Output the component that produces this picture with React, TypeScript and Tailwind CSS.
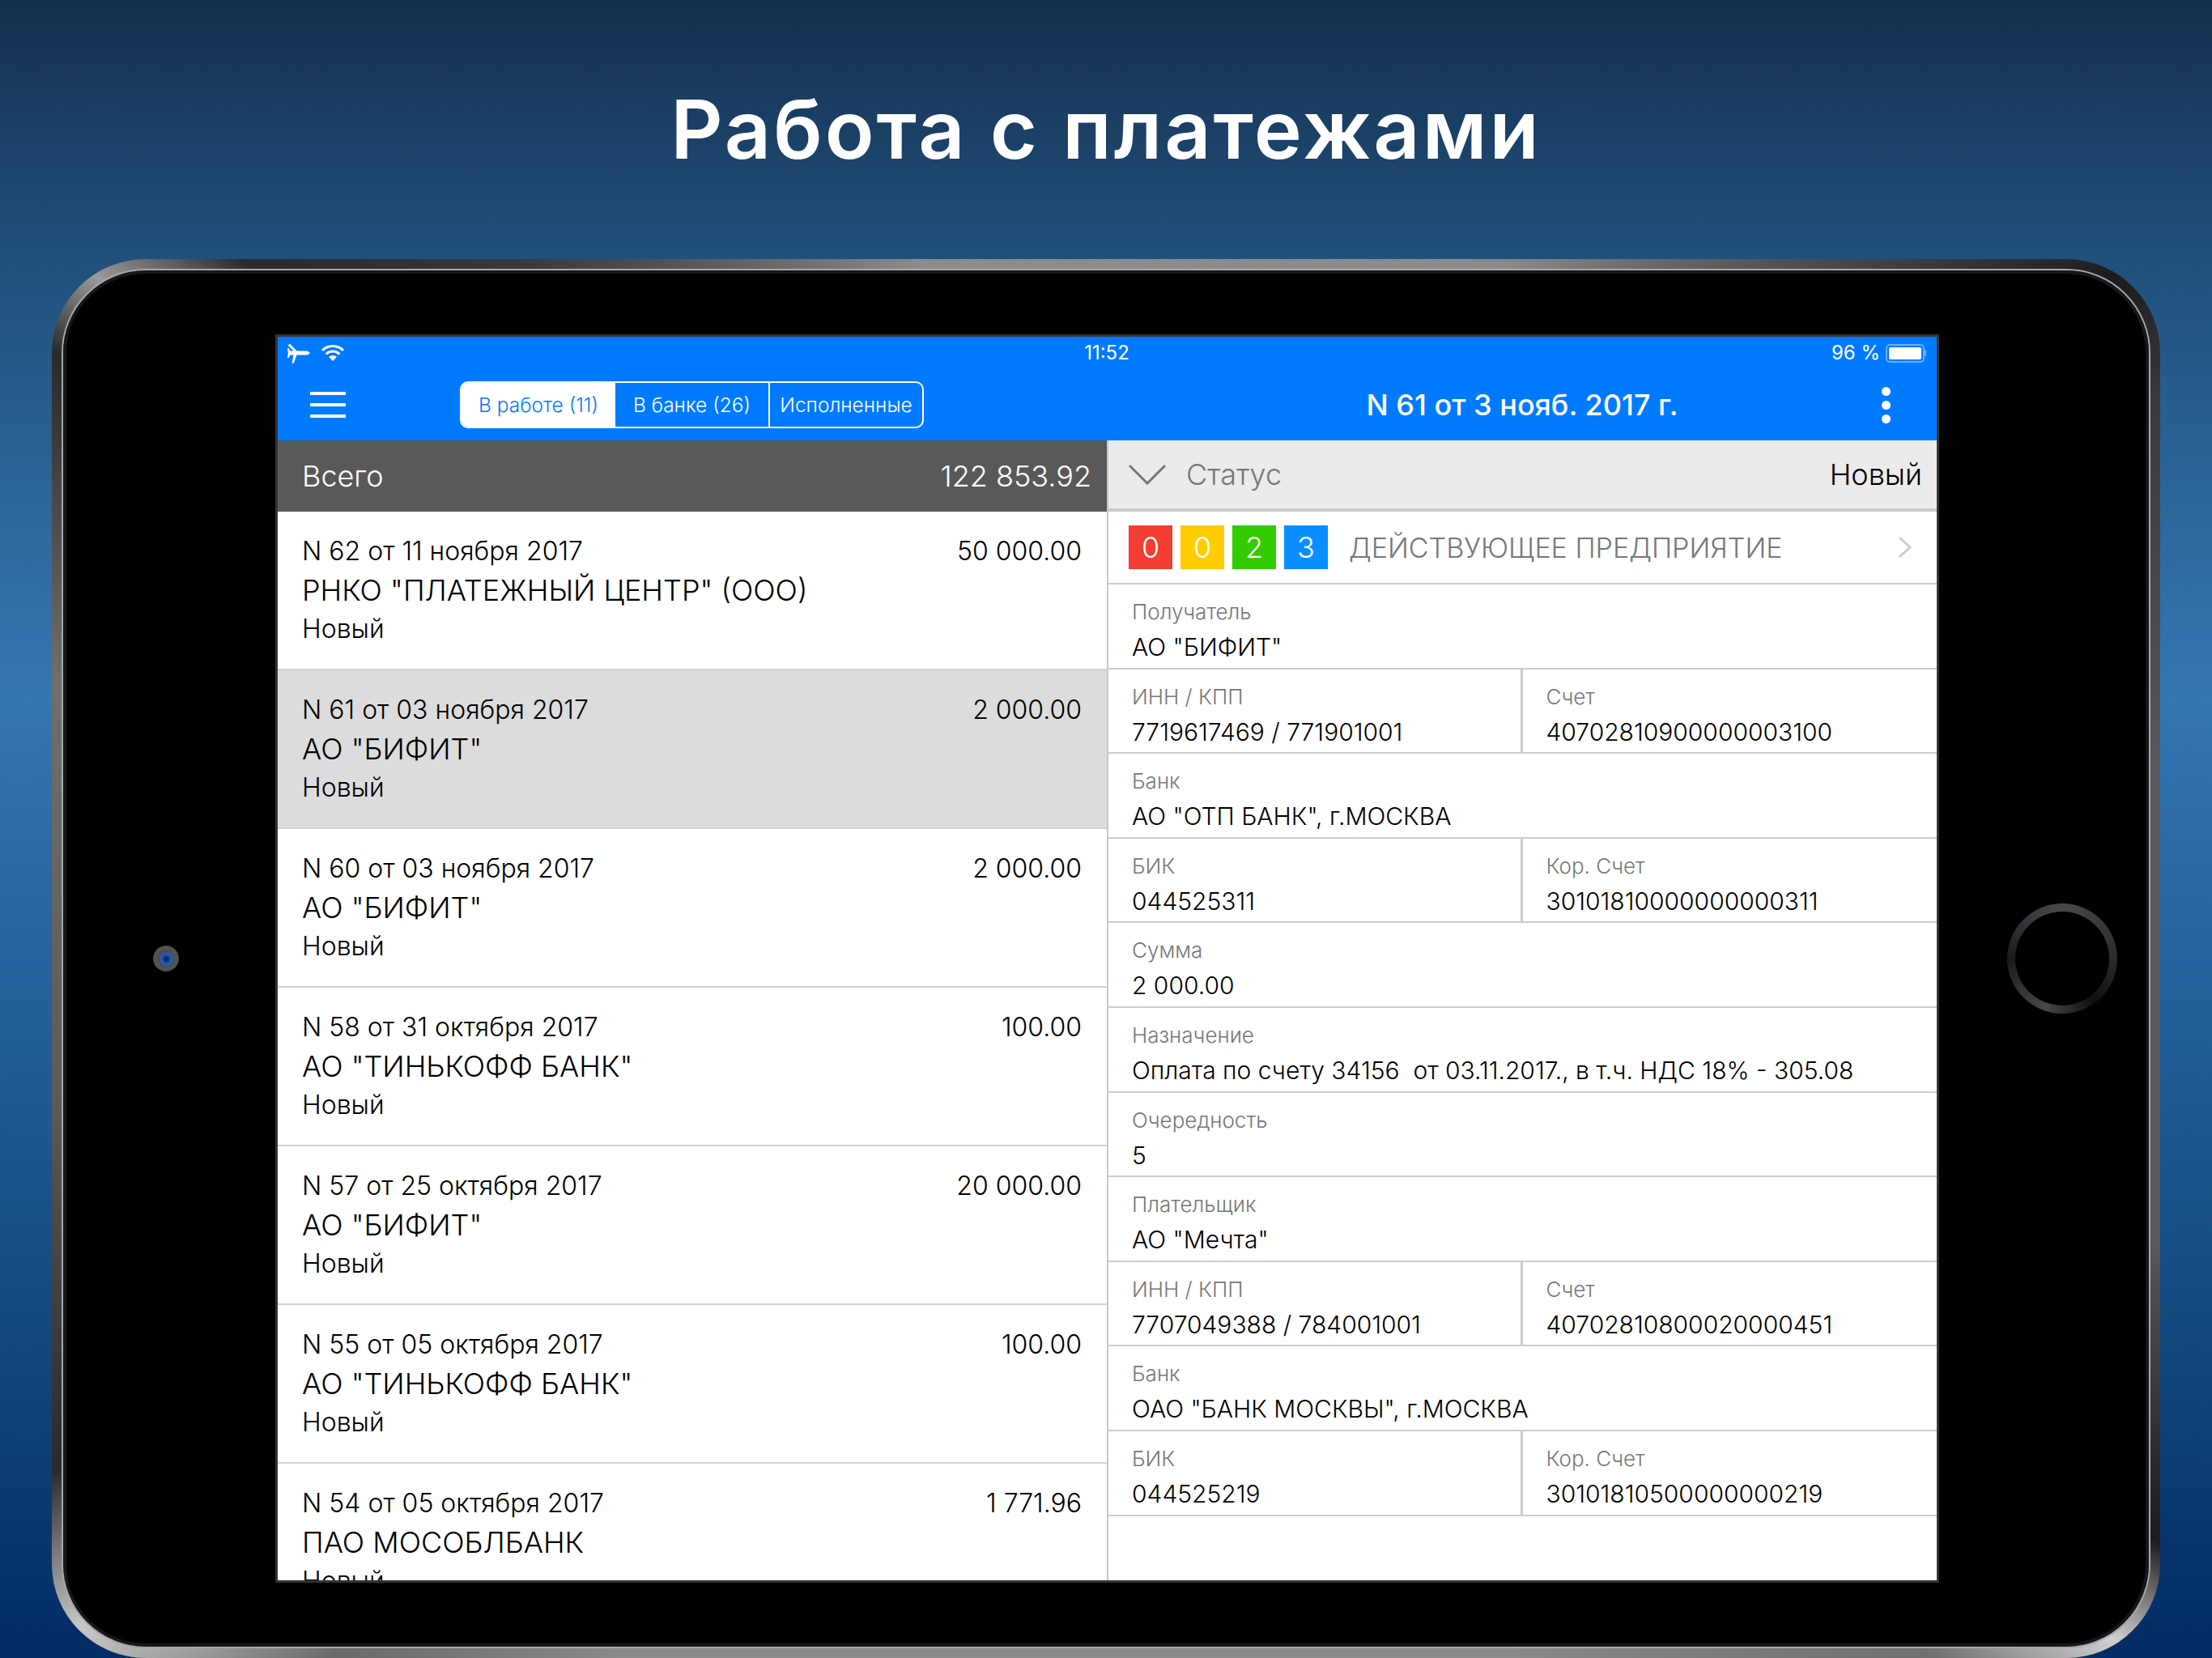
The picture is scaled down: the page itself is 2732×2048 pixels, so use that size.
const font = "font-['Inter','Liberation_Sans',sans-serif]";

const payments = [
  { title: "N 62 от 11 ноября 2017", sum: "50 000.00", name: 'РНКО "ПЛАТЕЖНЫЙ ЦЕНТР" (ООО)' },
  { title: "N 61 от 03 ноября 2017", sum: "2 000.00", name: 'АО "БИФИТ"', active: true },
  { title: "N 60 от 03 ноября 2017", sum: "2 000.00", name: 'АО "БИФИТ"' },
  { title: "N 58 от 31 октября 2017", sum: "100.00", name: 'АО "ТИНЬКОФФ БАНК"' },
  { title: "N 57 от 25 октября 2017", sum: "20 000.00", name: 'АО "БИФИТ"' },
  { title: "N 55 от 05 октября 2017", sum: "100.00", name: 'АО "ТИНЬКОФФ БАНК"' },
  { title: "N 54 от 05 октября 2017", sum: "1 771.96", name: "ПАО МОСОБЛБАНК" },
];

type Cell = { label: string; value: string };

const fields: Cell[][] = [
  [{ label: "Получатель", value: 'АО "БИФИТ"' }],
  [
    { label: "ИНН / КПП", value: "7719617469 / 771901001" },
    { label: "Счет", value: "40702810900000003100" },
  ],
  [{ label: "Банк", value: 'АО "ОТП БАНК", г.МОСКВА' }],
  [
    { label: "БИК", value: "044525311" },
    { label: "Кор. Счет", value: "30101810000000000311" },
  ],
  [{ label: "Сумма", value: "2 000.00" }],
  [{ label: "Назначение", value: "Оплата по счету 34156  от 03.11.2017., в т.ч. НДС 18% - 305.08" }],
  [{ label: "Очередность", value: "5" }],
  [{ label: "Плательщик", value: 'АО "Мечта"' }],
  [
    { label: "ИНН / КПП", value: "7707049388 / 784001001" },
    { label: "Счет", value: "40702810800020000451" },
  ],
  [{ label: "Банк", value: 'ОАО "БАНК МОСКВЫ", г.МОСКВА' }],
  [
    { label: "БИК", value: "044525219" },
    { label: "Кор. Счет", value: "30101810500000000219" },
  ],
];

const counters = [
  { n: "0", bg: "bg-[#f43d33]" },
  { n: "0", bg: "bg-[#ffcc00]" },
  { n: "2", bg: "bg-[#33cc00]" },
  { n: "3", bg: "bg-[#0a8fff]" },
];

function StatusBar() {
  return (
    <div className="grid h-[40px] grid-cols-[1fr_auto_1fr] items-center pl-[12px] pr-[13px] text-[24px] text-white">
      <div className="flex items-center gap-[14px]">
        <svg width="28" height="26" viewBox="0 0 28 26" fill="white">
          <path d="M0.5 3.5 L3 1.5 L11.5 10.5 L23 10.5 C26 10.5 27.5 12 27.5 13 C27.5 14 26 15.5 23 15.5 L11.5 15.5 L8 25.5 L5.5 25.5 L7.5 15.5 L3.5 15.5 L1.5 19 L0 19 L0.8 13 L0 7 L1.5 7 L3.5 10.5 L7.5 10.5 Z" />
        </svg>
        <svg width="28" height="20" viewBox="0 0 28 20" fill="white">
          <path d="M14 0 C19.5 0 24.5 2.2 28 5.8 L25.8 8 C22.8 5 18.6 3.1 14 3.1 C9.4 3.1 5.2 5 2.2 8 L0 5.8 C3.5 2.2 8.5 0 14 0 Z" />
          <path d="M14 6.5 C17.7 6.5 21 8 23.4 10.4 L21.2 12.6 C19.4 10.8 16.8 9.6 14 9.6 C11.2 9.6 8.6 10.8 6.8 12.6 L4.6 10.4 C7 8 10.3 6.5 14 6.5 Z" />
          <path d="M14 13 C15.9 13 17.6 13.8 18.8 15 L14 20 L9.2 15 C10.4 13.8 12.1 13 14 13 Z" />
        </svg>
      </div>
      <div className="font-[400]">11:52</div>
      <div className="flex items-center justify-end gap-[7px]">
        <span className="font-[400]">96 %</span>
        <div className="flex items-center">
          <div className="h-[23px] w-[48px] rounded-[5px] border-[2px] border-[#66afff] p-[2px]">
            <div className="h-full w-full rounded-[2px] bg-white" />
          </div>
          <div className="h-[8px] w-[2px] rounded-r-[2px] bg-[#66afff]" />
        </div>
      </div>
    </div>
  );
}

function NavBar() {
  return (
    <div className="flex h-[88px]">
      <div className="flex w-[1025px] items-center pl-[40px]">
        <div className="flex w-[44px] flex-col gap-[10px]">
          <div className="h-[4px] bg-white" />
          <div className="h-[4px] bg-white" />
          <div className="h-[4px] bg-white" />
        </div>
        <div className="ml-[141px] flex h-[58px] w-[573px] overflow-hidden rounded-[10px] border-[2px] border-white text-[24.5px] font-[300] text-white">
          <div className="flex w-[190px] items-center justify-center bg-white text-[#007aff]">В работе (11)</div>
          <div className="flex w-[191px] items-center justify-center border-r-[2px] border-white">В банке (26)</div>
          <div className="flex flex-1 items-center justify-center">Исполненные</div>
        </div>
      </div>
      <div className="grid flex-1 grid-cols-[1fr_auto_1fr] items-center">
        <div />
        <div className="text-[36px] font-[500] text-white">N 61 от 3 нояб. 2017 г.</div>
        <div className="flex flex-col items-end gap-[6px] pr-[57px]">
          <div className="h-[11px] w-[11px] rounded-full bg-white" />
          <div className="h-[11px] w-[11px] rounded-full bg-white" />
          <div className="h-[11px] w-[11px] rounded-full bg-white" />
        </div>
      </div>
    </div>
  );
}

function PaymentList() {
  return (
    <div className="h-full w-[1024px] shrink-0 overflow-hidden">
      <div className="flex h-[88px] items-center justify-between bg-[#595959] pl-[30px] pr-[19px] text-[36px] font-[300] text-white">
        <span>Всего</span>
        <span>122 853.92</span>
      </div>
      {payments.map((p) => (
        <div
          key={p.title}
          className={`flex h-[196px] flex-col justify-center gap-[8px] border-b-[2px] border-[#d2d2d2] pl-[30px] pr-[31px] font-[300] text-black ${
            p.active ? "bg-[#dcdcdc]" : "bg-white"
          }`}
        >
          <div className="flex h-[40px] items-center justify-between text-[32px]">
            <span>{p.title}</span>
            <span>{p.sum}</span>
          </div>
          <div className="flex h-[40px] items-center text-[36px]">{p.name}</div>
          <div className="flex h-[40px] items-center text-[32px]">Новый</div>
        </div>
      ))}
    </div>
  );
}

function Field({ cell }: { cell: Cell }) {
  return (
    <div className="flex flex-1 flex-col pl-[29px] pt-[16px] font-[300]">
      <div className="h-[36px] text-[26px] leading-[36px] text-[#777777]">{cell.label}</div>
      <div className="mt-[5px] text-[30px] leading-[40px] whitespace-pre text-black">{cell.value}</div>
    </div>
  );
}

function Details() {
  return (
    <div className="h-full flex-1 border-l-[2px] border-[#c8c8c8] bg-white">
      <div className="flex h-[88px] items-center border-b-[4px] border-[#cccccc] bg-[#ebebeb] pl-[25px] pr-[18px] text-[36px] font-[300]">
        <svg width="46" height="26" viewBox="0 0 46 26" fill="none" stroke="#777777" strokeWidth="3">
          <path d="M1 2 L23 24 L45 2" />
        </svg>
        <span className="ml-[25px] text-[#777777]">Статус</span>
        <span className="ml-auto text-black">Новый</span>
      </div>
      <div className="flex h-[90px] items-center border-b-[2px] border-[#cccccc] pl-[25px] pr-[30px]">
        <div className="flex gap-[10px]">
          {counters.map((c, i) => (
            <div key={i} className={`flex h-[54px] w-[54px] items-center justify-center text-[36px] font-[300] text-white ${c.bg}`}>
              {c.n}
            </div>
          ))}
        </div>
        <span className="ml-[26px] text-[34px] font-[300] text-[#777777]">ДЕЙСТВУЮЩЕЕ ПРЕДПРИЯТИЕ</span>
        <svg className="ml-auto" width="18" height="28" viewBox="0 0 18 28" fill="none" stroke="#cccccc" strokeWidth="3">
          <path d="M2 2 L15 14 L2 26" />
        </svg>
      </div>
      {fields.map((row, i) => (
        <div key={i} className="flex h-[104.6px] border-b-[2px] border-[#cccccc]">
          {row.map((cell, j) => (
            <div key={j} className={`flex ${row.length > 1 ? "w-1/2" : "w-full"} ${j === 0 && row.length > 1 ? "border-r-[3px] border-[#cccccc]" : ""}`}>
              <Field cell={cell} />
            </div>
          ))}
        </div>
      ))}
    </div>
  );
}

export default function App() {
  return (
    <div className={`flex h-[2048px] w-[2732px] flex-col overflow-hidden bg-[linear-gradient(180deg,#14304f_0%,#214f7a_15%,#3577b3_42%,#2a69a5_52%,#1f5a93_66%,#11447b_83%,#032b64_100%)] ${font}`}>
      <div className="flex h-[320px] shrink-0 items-center justify-center text-[100px] font-[600] tracking-[3px] text-white">
        Работа с платежами
      </div>
      <div className="ml-[64px] h-[1728px] w-[2604px] shrink-0 rounded-[116px] bg-[conic-gradient(#8c8c8c_0deg,#8a8a8a_30deg,#3a3a3c_50deg,#1c1c1e_56deg,#3a393d_62deg,#5a5860_80deg,#5a5860_105deg,#1c1c1e_119deg,#d0d0d0_124deg,#707070_130deg,#8a8a8a_150deg,#8a8a8a_215deg,#6a6a6a_228deg,#c8c8c8_237deg,#2a2a2c_244deg,#5a5a5a_262deg,#6f6f6f_285deg,#2a2a2c_300deg,#9a9a9a_304deg,#2a2a2c_309deg,#3a3a3c_320deg,#8c8c8c_345deg)] p-[12px]">
        <div className="h-full rounded-[104px] border-[2px] border-[#a8a8a8]">
          <div className="h-full rounded-[102px] border-[4px] border-[#14181c] bg-black">
            <div className="flex h-full items-center">
              <div className="flex w-[258px] shrink-0 pl-[107px]">
                <div className="flex h-[32px] w-[32px] items-center justify-center rounded-full bg-[radial-gradient(circle,#3a3a3a,#555555_60%,#2a2a2a)] shadow-[0_0_6px_#000000]">
                  <div className="h-[17px] w-[17px] rounded-full bg-[radial-gradient(circle,#10285c_15%,#2a5fc4_55%,#1b3f88)]" />
                </div>
              </div>
              <div className="flex h-[1542px] w-[2055px] shrink-0 flex-col overflow-hidden border-[3px] border-[#333333] bg-white">
                <div className="bg-[#007aff]">
                  <StatusBar />
                  <NavBar />
                </div>
                <div className="flex min-h-0 flex-1">
                  <PaymentList />
                  <Details />
                </div>
              </div>
              <div className="flex flex-1 pl-[84px]">
                <div className="h-[136px] w-[136px] rounded-full bg-[conic-gradient(#48474c,#2b2a2e_25%,#0e0e10_40%,#48474c_55%,#1a1a1c_75%,#3a393e_90%,#48474c)] p-[10px]">
                  <div className="h-full w-full rounded-full bg-black" />
                </div>
              </div>
            </div>
          </div>
        </div>
      </div>
    </div>
  );
}
